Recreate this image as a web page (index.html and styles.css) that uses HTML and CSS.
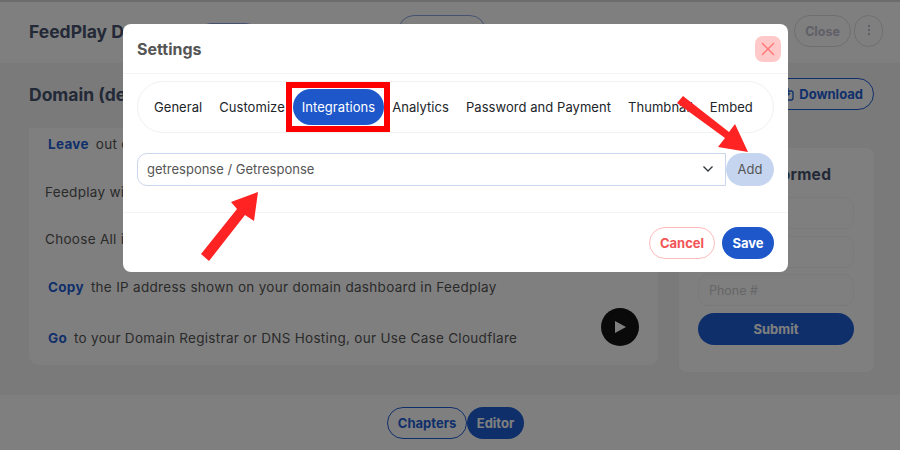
FILE: index.html
```html
<!DOCTYPE html>
<html lang="en">
<head>
    <meta charset="UTF-8">
    <meta name="viewport" content="width=device-width, initial-scale=1.0">
    <title>FeedPlay Settings</title>
    <link rel="stylesheet" href="styles.css">
</head>
<body>
    <div class="page">
        <header class="topbar">
            <h1>FeedPlay Domain</h1>
            <span class="pill-ghost status"></span>
            <span class="pill-ghost preview"></span>
            <div class="topbar-actions">
                <button class="btn-grey">Close</button>
                <button class="btn-more"><svg width="4" height="12" viewBox="0 0 4 12"><circle cx="2" cy="2" r="1.2"/><circle cx="2" cy="6" r="1.2"/><circle cx="2" cy="10" r="1.2"/></svg></button>
            </div>
        </header>

        <main class="content">
            <div class="content-head">
                <h2>Domain (details)</h2>
                <button class="btn-download">
                    <svg width="14" height="14" viewBox="0 0 14 14" fill="none" stroke="#1f5fd6" stroke-width="1.3"><rect x="2" y="4" width="10" height="9" rx="2"/><path d="M7 1v7M5 6l2 2 2-2"/></svg>
                    Download
                </button>
            </div>
            <div class="columns">
                <section class="steps">
                    <p class="step"><b>Leave</b> out of this tab</p>
                    <p class="step plain">Feedplay will show your IP</p>
                    <p class="step plain">Choose All in the list</p>
                    <p class="step"><b>Copy</b> the IP address shown on your domain dashboard in Feedplay</p>
                    <p class="step step-last"><b>Go</b> to your Domain Registrar or DNS Hosting, our Use Case Cloudflare</p>
                    <span class="play"><svg width="14" height="14" viewBox="0 0 14 14"><path d="M2 1l11 6-11 6z" fill="#fff"/></svg></span>
                </section>
                <aside class="side">
                    <h3>Stay Informed</h3>
                    <div class="field"></div>
                    <div class="field"></div>
                    <div class="field">Phone #</div>
                    <button class="btn-submit">Submit</button>
                </aside>
            </div>
        </main>

        <footer class="bottom">
            <button class="tab-outline">Chapters</button>
            <button class="tab-solid">Editor</button>
        </footer>
    </div>

    <div class="overlay"></div>

    <div class="modal">
        <div class="modal-head">
            <h4>Settings</h4>
            <button class="modal-close"><svg width="16" height="16" viewBox="0 0 16 16" stroke="#f77" stroke-width="1.4"><path d="M2 2l12 12M14 2L2 14"/></svg></button>
        </div>
        <div class="modal-body">
            <nav class="tabs">
                <span>General</span>
                <span>Customize</span>
                <span class="active">Integrations</span>
                <span>Analytics</span>
                <span>Password and Payment</span>
                <span>Thumbnail</span>
                <span>Embed</span>
            </nav>
            <div class="picker">
                <div class="select">
                    getresponse / Getresponse
                    <svg width="12" height="8" viewBox="0 0 12 8" fill="none" stroke="#343a40" stroke-width="1.4"><path d="M1.5 1.5L6 6l4.5-4.5"/></svg>
                </div>
                <button class="btn-add">Add</button>
            </div>
        </div>
        <div class="modal-foot">
            <button class="btn-cancel">Cancel</button>
            <button class="btn-save">Save</button>
        </div>
    </div>

    <!-- annotations drawn on top of the screenshot -->
    <div class="highlight"></div>
    <svg class="arrows" width="900" height="450" viewBox="0 0 900 450">
        <path d="M258 192L254 221L245 215L209 261L201 254L237 209L231 202Z" fill="#ff2323"/>
        <path d="M683 96L729 132L735 124L748 152L718 147L725 138L677 103Z" fill="#ff2323"/>
    </svg>
</body>
</html>
```

FILE: styles.css
```css
* {
    box-sizing: border-box;
}

body {
    margin: 0;
    width: 900px;
    height: 450px;
    overflow: hidden;
    font-family: Inter, "Open Sans", sans-serif;
    color: #212529;
}

button {
    font-family: inherit;
}

.page {
    height: 450px;
    display: flex;
    flex-direction: column;
    background: #f5f5f5;
}

.topbar {
    height: 63px;
    flex: none;
    display: flex;
    align-items: flex-start;
    padding: 13px 17px 0 29px;
    background: #fff;
    border-top: 2px solid #d8d8d8;
}

.topbar h1 {
    margin: 6px 0 0;
    font-size: 17.5px;
    font-weight: 700;
    color: #46526e;
    white-space: nowrap;
    width: 166px;
}

.pill-ghost {
    height: 32px;
    border: 1px solid #8aa6e0;
    border-radius: 16px;
}

.status {
    width: 67px;
    margin-top: 8px;
}

.preview {
    width: 88px;
    margin-left: 136px;
}

.topbar-actions {
    margin-left: auto;
    display: flex;
    gap: 3px;
}

.btn-grey {
    width: 57px;
    height: 32px;
    background: #fff;
    border: 1px solid #dedede;
    border-radius: 16px;
    font-size: 12.5px;
    font-weight: 700;
    color: #bfc0ce;
}

.btn-more {
    width: 29px;
    height: 32px;
    padding: 0;
    background: #fff;
    border: 1px solid #dedede;
    border-radius: 16px;
    fill: #bfc0ce;
}

.content {
    flex: 1;
    padding: 15px 26px 0 29px;
}

.content-head {
    display: flex;
    justify-content: space-between;
    align-items: center;
    height: 32px;
}

.content-head h2 {
    margin: 0;
    font-size: 17.5px;
    font-weight: 700;
    color: #46526e;
}

.btn-download {
    display: flex;
    align-items: center;
    gap: 4px;
    height: 32px;
    padding: 0 10px 0 13px;
    background: #fff;
    border: 1px solid #1f5fd6;
    border-radius: 16px;
    font-size: 13px;
    font-weight: 700;
    color: #1f5fd6;
}

.columns {
    display: flex;
    align-items: flex-start;
    gap: 21px;
    margin-top: 18px;
}

.steps {
    position: relative;
    width: 629px;
    height: 237px;
    padding: 4px 19px;
    display: flex;
    flex-direction: column;
    gap: 23.5px;
    background: #fff;
    border-radius: 0 0 10px 10px;
}

.step {
    margin: 0;
    height: 24px;
    display: flex;
    align-items: center;
    gap: 7px;
    font-size: 13.5px;
    letter-spacing: 0.3px;
    color: #555;
    white-space: nowrap;
}

.step b {
    color: #1f5fd6;
    font-size: 13.5px;
}

.step-last {
    margin-top: 3.5px;
}

.plain {
    margin-left: -3px;
}

.play {
    position: absolute;
    right: 19px;
    bottom: 19px;
    width: 38px;
    height: 38px;
    display: flex;
    align-items: center;
    justify-content: center;
    background: #141414;
    border-radius: 50%;
}

.side {
    width: 195px;
    height: 224px;
    margin-top: 20px;
    padding: 18px 20px 0 19px;
    background: #fff;
    border-radius: 8px;
    display: flex;
    flex-direction: column;
    gap: 6.5px;
}

.side h3 {
    margin: 0 0 6.5px;
    height: 18px;
    line-height: 18px;
    text-align: center;
    white-space: nowrap;
    font-size: 15.5px;
    letter-spacing: 0.3px;
    font-weight: 700;
    color: #46526e;
}

.field {
    height: 32px;
    flex: none;
    padding: 0 10px;
    display: flex;
    align-items: center;
    border: 1px solid #f5f5f5;
    border-radius: 10px;
    font-size: 12.5px;
    color: #ccc;
}

.btn-submit {
    height: 32px;
    flex: none;
    border: 0;
    border-radius: 16px;
    background: #1f5fd6;
    color: #fff;
    font-size: 13px;
    font-weight: 700;
}

.bottom {
    height: 55px;
    flex: none;
    display: flex;
    justify-content: center;
    align-items: center;
    padding-left: 11px;
    background: #fff;
}

.tab-outline,
.tab-solid {
    height: 32px;
    border-radius: 16px;
    font-size: 13px;
    font-weight: 700;
}

.tab-outline {
    width: 80px;
    background: #fff;
    border: 1px solid #1f5fd6;
    color: #1f5fd6;
}

.tab-solid {
    width: 57px;
    background: #1f5fd6;
    border: 0;
    color: #fff;
}

.overlay {
    position: absolute;
    inset: 0;
    background: rgba(0, 0, 0, 0.5);
}

.modal {
    position: absolute;
    left: 123px;
    top: 24px;
    width: 665px;
    height: 248px;
    display: flex;
    flex-direction: column;
    background: #fff;
    border-radius: 8px;
}

.modal-head {
    height: 50px;
    flex: none;
    display: flex;
    align-items: center;
    justify-content: space-between;
    padding: 0 7px 0 14px;
    border-bottom: 1px solid #f4f4f4;
}

.modal-head h4 {
    margin: 0;
    font-size: 16px;
    font-weight: 700;
    color: #555;
}

.modal-close {
    width: 26px;
    height: 26px;
    padding: 0;
    display: flex;
    align-items: center;
    justify-content: center;
    background: #ffc9c9;
    border: 0;
    border-radius: 8px;
}

.modal-body {
    flex: 1;
    padding: 7px 14px 0;
}

.tabs {
    height: 52px;
    display: flex;
    align-items: center;
    gap: 17px;
    padding: 0 16px;
    border: 1px solid #f1f1f1;
    border-radius: 26px;
    font-size: 13px;
    letter-spacing: 0.05px;
    color: #212529;
}

.tabs span {
    white-space: nowrap;
}

.tabs .active {
    margin: 0 -9px;
    padding: 10px 9px;
    border-radius: 18px;
    background: #1d57c9;
    color: #fff;
}

.picker {
    display: flex;
    margin-top: 20px;
    height: 33px;
}

.select {
    flex: 1;
    display: flex;
    align-items: center;
    justify-content: space-between;
    padding: 0 11px 1px 9px;
    border: 1px solid #c9d6ee;
    border-radius: 10px 0 0 10px;
    font-size: 13px;
    color: #555;
}

.btn-add {
    width: 48px;
    padding: 0 0 1px;
    border: 0;
    border-radius: 17px;
    background: #c5d5f0;
    font-size: 13px;
    color: #555;
}

.modal-foot {
    height: 60px;
    flex: none;
    display: flex;
    justify-content: flex-end;
    align-items: center;
    gap: 7px;
    padding: 0 14px;
    border-top: 1px solid #f4f4f4;
}

.btn-cancel,
.btn-save {
    height: 32px;
    border-radius: 16px;
    font-size: 13px;
    font-weight: 700;
}

.btn-cancel {
    width: 66px;
    padding: 0;
    background: #fff;
    border: 1px solid #fbb;
    color: #f25555;
}

.btn-save {
    width: 52px;
    padding: 0;
    background: #1d57c9;
    border: 0;
    color: #fff;
}

.highlight {
    position: absolute;
    left: 286px;
    top: 82px;
    width: 104px;
    height: 50px;
    border: 6px solid #f00;
}

.arrows {
    position: absolute;
    left: 0;
    top: 0;
}
```
